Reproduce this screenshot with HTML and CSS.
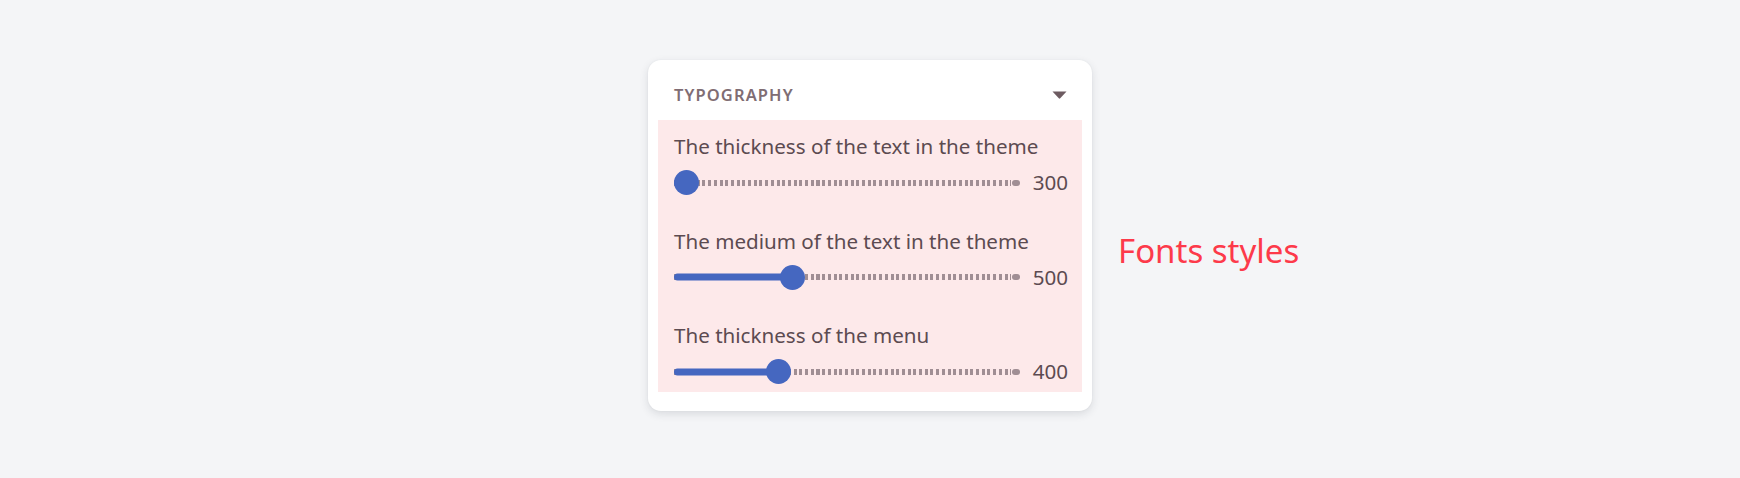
FILE: index.html
```html
<!DOCTYPE html>
<html lang="en">
<head>
<meta charset="utf-8">
<title>Typography</title>
<link rel="stylesheet" href="styles.css">
</head>
<body>
<div class="stage">
  <div class="spacer"></div>
  <section class="card">
    <header class="card-head">
      <span class="card-title">TYPOGRAPHY</span>
      <svg class="caret" width="15" height="8" viewBox="0 0 15 8" aria-hidden="true"><path d="M0.5 0.5 H14.5 L8.2 7.3 Q7.5 8 6.8 7.3 Z" fill="#6d5b61"/></svg>
    </header>
    <div class="panel">
      <div class="item">
        <div class="label">The thickness of the text in the theme</div>
        <div class="slider">
          <div class="track" style="--p:0"><div class="fill"></div><div class="thumb"></div></div>
          <span class="value">300</span>
        </div>
      </div>
      <div class="item">
        <div class="label">The medium of the text in the theme</div>
        <div class="slider">
          <div class="track" style="--p:0.331"><div class="fill"></div><div class="thumb"></div></div>
          <span class="value">500</span>
        </div>
      </div>
      <div class="item">
        <div class="label">The thickness of the menu</div>
        <div class="slider">
          <div class="track" style="--p:0.286"><div class="fill"></div><div class="thumb"></div></div>
          <span class="value">400</span>
        </div>
      </div>
    </div>
  </section>
  <div class="note-col"><span class="note">Fonts styles</span></div>
</div>
</body>
</html>
```

FILE: styles.css
```css
* { box-sizing: border-box; }

html, body {
  margin: 0;
  padding: 0;
}

body {
  background: #f4f5f7;
  font-family: "Noto Sans", "Open Sans", sans-serif;
  width: 1740px;
  height: 478px;
  overflow: hidden;
}

.stage {
  display: grid;
  grid-template-columns: 1fr 444px 1fr;
  align-content: start;
  align-items: start;
  padding-top: 60px;
  height: 478px;
}

.card {
  background: #ffffff;
  border-radius: 13px;
  box-shadow: 0 3px 9px rgba(40, 44, 60, 0.13), 0 0 2px rgba(40, 44, 60, 0.06);
  padding: 0 10px 19px;
}

.card-head {
  height: 60px;
  padding: 24px 15px 14px 16px;
  display: flex;
  align-items: center;
  justify-content: space-between;
}

.card-title {
  font-size: 16.5px;
  line-height: 22px;
  font-weight: 600;
  letter-spacing: 1.1px;
  color: #806d73;
}

.caret {
  display: block;
}

.panel {
  background: #fde9ea;
  padding: 12px 14px 8px 16px;
  display: flex;
  flex-direction: column;
  gap: 31.5px;
}

.item {
  display: flex;
  flex-direction: column;
  gap: 10px;
}

.label {
  font-size: 20.6px;
  line-height: 28px;
  color: #5c4b51;
  white-space: nowrap;
}

.slider {
  display: flex;
  align-items: center;
  height: 25px;
}

.track {
  position: relative;
  flex: 1;
  height: 25px;
}

.track::before {
  content: "";
  position: absolute;
  left: 0;
  right: 9px;
  top: 50%;
  height: 6px;
  transform: translateY(-50%);
  background: repeating-linear-gradient(to right, #a08e94 0 3px, transparent 3px 5.7px);
}

.track::after {
  content: "";
  position: absolute;
  right: 0;
  width: 8px;
  top: 50%;
  height: 6px;
  transform: translateY(-50%);
  border-radius: 3px;
  background: #a08e94;
}

.fill {
  position: absolute;
  left: 0;
  top: 50%;
  height: 7px;
  transform: translateY(-50%);
  border-radius: 4px;
  background: #4567c0;
  width: calc((100% - 25px) * var(--p) + 12.5px);
}

.thumb {
  position: absolute;
  top: 0;
  left: calc((100% - 25px) * var(--p));
  width: 25px;
  height: 25px;
  border-radius: 50%;
  background: #4567c0;
}

.value {
  margin-left: 13px;
  font-size: 20.6px;
  line-height: 25px;
  color: #5c4b51;
}

.note-col {
  align-self: center;
  margin-top: 31px;
  padding-left: 26px;
}

.note {
  font-size: 33px;
  line-height: 40px;
  color: #fd3a4a;
  white-space: nowrap;
}
```
